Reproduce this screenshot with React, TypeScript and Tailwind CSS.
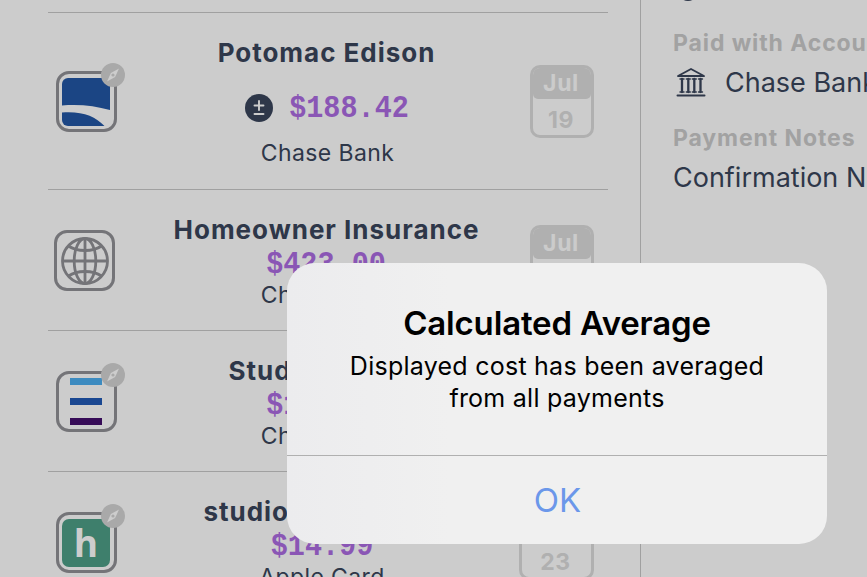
import React from 'react';

function Compass() {
  return (
    <svg viewBox="0 0 24 24" className="absolute -right-[11px] -top-[11px] h-6 w-6">
      <circle cx="12" cy="12" r="12" fill="#a9a9a9" />
      <path d="M18 5.5L14.1 14.1L6 18.5L9.9 9.9Z" fill="#cdcdcd" />
      <circle cx="12" cy="12" r="1.6" fill="#a9a9a9" />
    </svg>
  );
}

function Calendar({ day, wide }: { day: string; wide?: boolean }) {
  return (
    <div className={`${wide ? 'w-[75px]' : 'w-[64px]'} h-[73px] overflow-hidden rounded-[10px] border-[3px] border-[#b0b0b0] text-center text-[23px] font-bold tracking-[0.6px] text-[#b0b0b0]`}>
      <div className="h-[31px] rounded-b-[5px] bg-[#b0b0b0] pr-[2px] leading-[31px] text-[#cbcbcb]">Jul</div>
      <div className="pr-[2px] leading-[42px]">{day}</div>
    </div>
  );
}

function Potomac() {
  return (
    <svg viewBox="0 0 48 48" className="h-12 w-12">
      <rect width="48" height="48" rx="6" fill="#1b4584" />
      <path d="M0 27.5C18 26 33 28 48 32V48H42.5C33 38 20 33 0 34.5Z" fill="#cdcdcd" />
    </svg>
  );
}

function Globe() {
  return (
    <svg viewBox="0 0 48 48" className="h-12 w-12" fill="none" stroke="#747478" strokeWidth="2.8">
      <circle cx="24" cy="24" r="22.5" />
      <path d="M24 1V47M1 24H47" />
      <ellipse cx="24" cy="24" rx="10.8" ry="22.5" />
      <path d="M7.5 9C16 15 32 15 40.5 9M7.5 39C16 33 32 33 40.5 39" />
    </svg>
  );
}

function Row({ icon, badge, name, price, account, day, wide, avg, rowClass }: {
  icon: React.ReactNode; badge?: boolean; name: string; price: string;
  account: string; day: string; wide?: boolean; avg?: boolean; rowClass: string;
}) {
  return (
    <div className={`flex border-t border-[#a0a0a0] ${rowClass}`}>
      <div className={`w-[110px] shrink-0 ${avg ? 'pt-[58px]' : 'pt-[40px]'} ${badge ? 'pl-[8px]' : 'pl-[6px]'}`}>
        <div className={`relative flex h-[61px] w-[61px] items-center justify-center rounded-[13px] border-[3px] border-[#747478] ${badge ? 'pr-px' : ''}`}>
          {icon}
          {badge && <Compass />}
        </div>
      </div>
      <div className={`flex w-[336px] shrink-0 flex-col items-center whitespace-nowrap pt-[24px] ${wide ? 'pr-[8px]' : ''}`}>
        <div className="pl-px text-[26px] font-bold leading-[31px] tracking-[0.98px]">{name}</div>
        <div className={`flex items-center ${avg ? 'h-[79px] gap-4 pl-[2px]' : 'h-[36px]'}`}>
          {avg && (
            <svg viewBox="0 0 28 28" className="h-7 w-7">
              <circle cx="14" cy="14" r="14" fill="#2e3749" />
              <path d="M14 7V16M9.5 11.5H18.5M9.5 20H18.5" stroke="#cdcdcd" strokeWidth="1.9" strokeLinecap="round" />
            </svg>
          )}
          <div className="mt-[3px] scale-y-110 font-['Liberation_Mono',monospace] text-[28.5px] font-bold leading-[34px] text-[#8a56b5]">{price}</div>
        </div>
        <div className={`text-[23px] leading-[28px] tracking-[0.4px] ${avg ? '-mt-[8px]' : ''} ${wide ? '' : 'pl-[3px]'}`}>{account}</div>
      </div>
      <div className={`${avg ? 'pt-[52px]' : 'pt-[35px]'} ${wide ? 'ml-[25px]' : 'ml-[36px]'}`}>
        <Calendar day={day} wide={wide} />
      </div>
    </div>
  );
}

function BankIcon() {
  return (
    <svg viewBox="0 0 30 30" className="-mt-[2px] h-[30px] w-[30px] shrink-0" fill="none" stroke="#2e3749" strokeWidth="1.9" strokeLinejoin="round" strokeLinecap="round">
      <path d="M2 9L15 2L28 9Z" />
      <path d="M1.5 28.5H28.5" strokeWidth="2" />
      <path d="M4 12H8M10.3 12H14.3M16.3 12H20.3M22.5 12H26.5M4 25H8M10.3 25H14.3M16.3 25H20.3M22.5 25H26.5" strokeWidth="1.4" />
      <path d="M6 12V25M12.3 12V25M18.3 12V25M24.5 12V25" strokeWidth="2.3" />
    </svg>
  );
}

export default function App() {
  return (
    <div className="relative flex h-[577px] w-[867px] overflow-hidden bg-[#cccccc] font-['Inter',sans-serif] text-[#2e3749]">
      <main className="w-[608px] shrink-0 pl-[48px] pt-[12px]">
        <Row avg badge icon={<Potomac />} name="Potomac Edison" price="$188.42" account="Chase Bank" day="19" rowClass="h-[177px]" />
        <Row icon={<Globe />} name="Homeowner Insurance" price="$423.00" account="Chase Bank" day="20" rowClass="h-[141px]" />
        <Row
          badge
          icon={
            <div className="flex h-[47px] w-[32px] flex-col justify-between">
              <div className="h-[7px] bg-[#3d8bc0]" />
              <div className="h-[7px] bg-[#1a4791]" />
              <div className="h-[7px] bg-[#360b57]" />
            </div>
          }
          name="Student Loans"
          price="$150.00"
          account="Chase Bank"
          day="21"
          rowClass="h-[141px]"
        />
        <Row
          badge
          wide
          icon={<div className="h-12 w-12 rounded-[7px] bg-[#3e7f6c] text-center font-['Open_Sans',sans-serif] text-[37px] font-bold leading-[48px] text-[#cdcdcd]">h</div>}
          name="studiostreamplus"
          price="$14.99"
          account="Apple Card"
          day="23"
          rowClass="h-[141px]"
        />
      </main>
      <aside className="ml-[32px] h-[577px] w-[227px] shrink-0 overflow-hidden whitespace-nowrap border-l border-[#a0a0a0] pl-[32px]">
        <div className="ml-[5px] h-[27px] overflow-hidden">
          <div className="-mt-[25px] h-[26px] w-[20px] rounded-full border-[3px] border-[#2e3749]" />
        </div>
        <div className="text-[23px] font-bold leading-[32px] tracking-[0.9px] text-[#a2a2a2]">Paid with Account</div>
        <div className="flex h-[48px] items-center gap-[19px] pl-[3px] text-[27px]">
          <BankIcon />
          <span>Chase Bank</span>
        </div>
        <div className="mt-[15px] text-[23px] font-bold leading-[32px] tracking-[0.9px] text-[#a2a2a2]">Payment Notes</div>
        <div className="text-[27px] leading-[47px]">Confirmation Number</div>
      </aside>
      <div className="absolute left-[287px] top-[263px] h-[281px] w-[540px] overflow-hidden rounded-[28px] bg-linear-to-r from-[#ececee] to-[#f0f0f0] to-30% text-center text-black">
        <div className="h-[193px] border-b border-[#b0b0b0] pt-[40px]">
          <div className="text-[33px] font-semibold leading-[40px] tracking-[-0.16px]">Calculated Average</div>
          <div className="mt-[7px] text-[25px] leading-[32px] tracking-[0.25px]">Displayed cost has been averaged<br />from all payments</div>
        </div>
        <div className="pl-px text-[33px] leading-[88px] text-[#6b97ea]">OK</div>
      </div>
    </div>
  );
}
